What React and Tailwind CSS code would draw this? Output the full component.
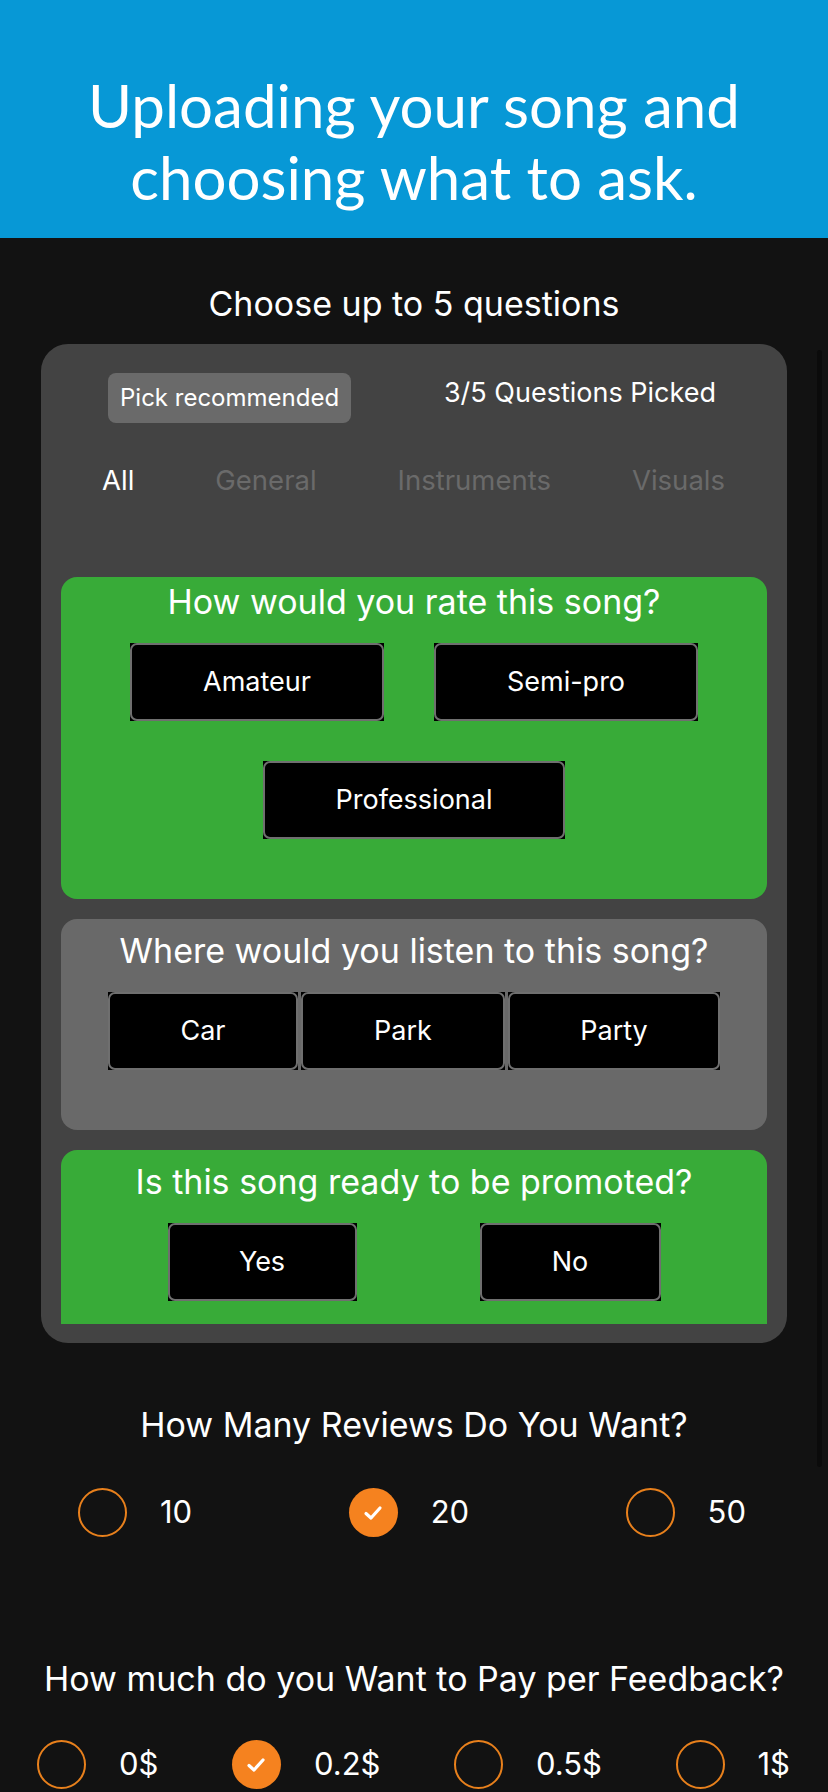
import React from 'react';

const sans = { fontFamily: 'Inter, "Noto Sans", sans-serif' };

function OptionButton({ label, width }) {
    return (
        <div className={`bg-black h-[78px] ${width} shrink-0`}>
            <div className="h-full w-full rounded-[7px] border-2 border-[#6f6f6f] flex items-center justify-center text-white text-[27px]">
                {label}
            </div>
        </div>
    );
}

function QuestionCard({ title, color, top, children, bottom = 'pb-[60px]' }) {
    return (
        <div className={`${color} rounded-[16px] ${top} ${bottom} shrink-0`}>
            <p className="text-white text-[34px] leading-[36px] text-center mb-[23px]">{title}</p>
            {children}
        </div>
    );
}

function Radio({ label, checked }) {
    return (
        <div className="flex items-center gap-[33px]">
            {checked ? (
                <div className="w-[49px] h-[49px] rounded-full bg-[#f5821f] flex items-center justify-center">
                    <svg width="20" height="16" viewBox="0 0 20 16" fill="none">
                        <path d="M3 8.5 L8 13 L17 3" stroke="white" strokeWidth="3.2" strokeLinecap="round" strokeLinejoin="round" />
                    </svg>
                </div>
            ) : (
                <div className="w-[49px] h-[49px] rounded-full border-2 border-[#e8801c]" />
            )}
            <span className="text-white text-[31px]">{label}</span>
        </div>
    );
}

export default function App() {
    return (
        <div className="relative w-[828px] h-[1792px] overflow-hidden bg-[#121212]" style={sans}>
            {/* Header */}
            <div className="bg-[#0798d6] h-[238px] pt-[69px]">
                <h1
                    className="text-white text-[60px] leading-[72px] text-center"
                    style={{ fontFamily: 'Lato, "Noto Sans", sans-serif' }}
                >
                    Uploading your song and
                    <br />
                    choosing what to ask.
                </h1>
            </div>

            <p className="text-white text-[34px] leading-[36px] text-center mt-[48px]">Choose up to 5 questions</p>

            {/* Question picker */}
            <div className="mx-[41px] mt-[22px] bg-[#434343] rounded-[27px] pt-[29px] pb-[19px]">
                <div className="flex items-center pl-[67px] pr-[71px]">
                    <div className="bg-[#6a6a6a] rounded-[8px] h-[50px] px-[12px] flex items-center text-white text-[24px]">
                        Pick recommended
                    </div>
                    <span className="ml-auto text-white text-[27px] -mt-[10px]">3/5 Questions Picked</span>
                </div>

                <div className="flex items-center pl-[61px] gap-[81px] mt-[41px] text-[27.5px] leading-[32px]">
                    <span className="text-white">All</span>
                    <span className="text-[#6a6a6a]">General</span>
                    <span className="text-[#6a6a6a]">Instruments</span>
                    <span className="text-[#6a6a6a]">Visuals</span>
                </div>

                <div className="mx-[20px] mt-[81px] h-[747px] overflow-hidden flex flex-col gap-[20px]">
                    <QuestionCard title="How would you rate this song?" color="bg-[#38ab38]" top="pt-[7px]">
                        <div className="flex justify-center gap-[50px]">
                            <OptionButton label="Amateur" width="w-[254px]" />
                            <OptionButton label="Semi-pro" width="w-[264px]" />
                        </div>
                        <div className="flex justify-center mt-[40px]">
                            <OptionButton label="Professional" width="w-[302px]" />
                        </div>
                    </QuestionCard>

                    <QuestionCard title="Where would you listen to this song?" color="bg-[#696969]" top="pt-[14px]">
                        <div className="flex justify-center gap-[3px]">
                            <OptionButton label="Car" width="w-[190px]" />
                            <OptionButton label="Park" width="w-[204px]" />
                            <OptionButton label="Party" width="w-[212px]" />
                        </div>
                    </QuestionCard>

                    <QuestionCard title="Is this song ready to be promoted?" color="bg-[#38ab38]" top="pt-[14px]">
                        <div className="flex justify-center gap-[123px]">
                            <OptionButton label="Yes" width="w-[189px]" />
                            <OptionButton label="No" width="w-[181px]" />
                        </div>
                    </QuestionCard>
                </div>
            </div>

            {/* Reviews */}
            <p className="text-white text-[34px] leading-[36px] text-center mt-[64px]">How Many Reviews Do You Want?</p>
            <div className="flex justify-between pl-[78px] pr-[82px] mt-[45px]">
                <Radio label="10" />
                <Radio label="20" checked />
                <Radio label="50" />
            </div>

            {/* Pay */}
            <p className="text-white text-[34px] leading-[36px] text-center mt-[124px]">How much do you Want to Pay per Feedback?</p>
            <div className="flex justify-between pl-[37px] pr-[38px] mt-[43px]">
                <Radio label="0$" />
                <Radio label="0.2$" checked />
                <Radio label="0.5$" />
                <Radio label="1$" />
            </div>

            {/* scroll indicator */}
            <div className="absolute right-[6px] top-[350px] w-[5px] h-[1117px] bg-[#0b0b0b] rounded-full" />
        </div>
    );
}
